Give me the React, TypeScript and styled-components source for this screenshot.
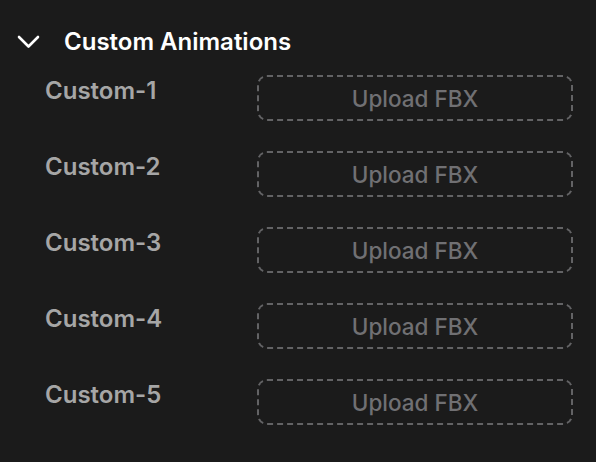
import React from 'react';
import styled, { createGlobalStyle } from 'styled-components';

const GlobalStyle = createGlobalStyle`
  html, body {
    margin: 0;
    padding: 0;
    background: #1b1b1b;
  }
  body {
    font-family: Inter, "Noto Sans", sans-serif;
    -webkit-font-smoothing: antialiased;
  }
`;

const Panel = styled.section`
  width: 596px;
  height: 462px;
  box-sizing: border-box;
  padding: 28px 23px 0 17px;
  background: #1b1b1b;
`;

const Header = styled.div`
  display: flex;
  align-items: center;
  gap: 24px;
  height: 28px;
  line-height: 28px;
  color: #ffffff;
  font-size: 24px;
  font-weight: 600;
`;

const Chevron = styled.svg`
  width: 23px;
  height: 14px;
  flex-shrink: 0;
`;

const List = styled.div`
  display: flex;
  flex-direction: column;
  gap: 30px;
  margin-top: 19px;
  padding-left: 28px;
`;

const Row = styled.div`
  display: flex;
  align-items: flex-start;
  justify-content: space-between;
`;

const Label = styled.span`
  padding-top: 2px;
  line-height: 28px;
  color: #a6a6a6;
  font-size: 24px;
  font-weight: 600;
`;

const UploadButton = styled.button`
  width: 316px;
  height: 46px;
  padding: 0;
  box-sizing: border-box;
  border: 2px dashed #636365;
  border-radius: 10px;
  background: transparent;
  color: #707073;
  font-family: Inter, "Noto Sans", sans-serif;
  font-size: 22.5px;
  font-weight: 500;
  cursor: pointer;
`;

const slots = ['Custom-1', 'Custom-2', 'Custom-3', 'Custom-4', 'Custom-5'];

export default function App() {
  return (
    <>
      <GlobalStyle />
      <Panel>
        <Header>
          <Chevron viewBox="0 0 23 14" fill="none">
            <path d="M2 2 L11.5 11.5 L21 2" stroke="#ffffff" strokeWidth="2.6" strokeLinecap="round" strokeLinejoin="round" />
          </Chevron>
          Custom Animations
        </Header>
        <List>
          {slots.map((name) => (
            <Row key={name}>
              <Label>{name}</Label>
              <UploadButton type="button">Upload FBX</UploadButton>
            </Row>
          ))}
        </List>
      </Panel>
    </>
  );
}
